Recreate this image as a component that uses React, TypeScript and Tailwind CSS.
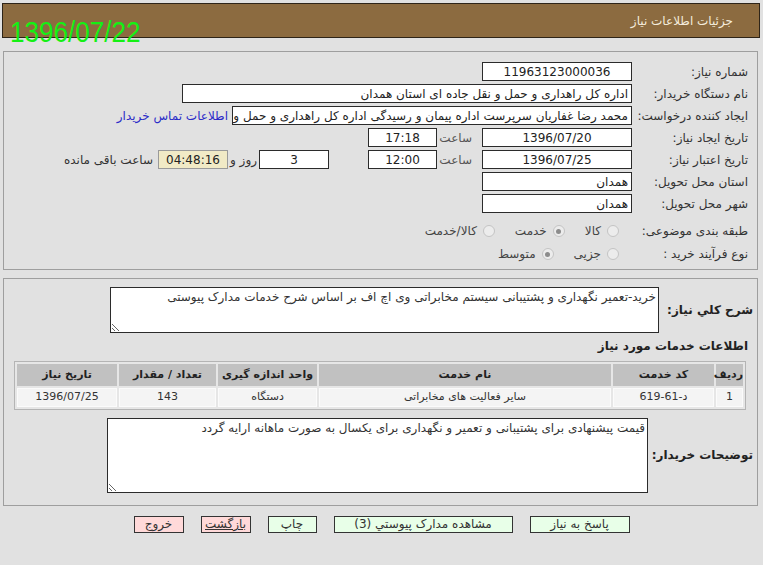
import React from "react";

const Box = ({
  className,
  children,
}: {
  className: string;
  children?: React.ReactNode;
}) => (
  <div
    className={
      "h-[19px] shrink-0 border border-[#2b2b2b] bg-white px-[3px] flex items-center overflow-hidden whitespace-nowrap text-[12px] text-[#222] " +
      className
    }
  >
    {children}
  </div>
);

const Radio = ({ checked, label }: { checked?: boolean; label: string }) => (
  <div className="flex items-center gap-[6px]">
    <span className="w-[12px] h-[12px] rounded-full border border-[#c4c4c4] bg-[#ececec] flex items-center justify-center">
      {checked && <span className="w-[5px] h-[5px] rounded-full bg-[#8c8c8c]" />}
    </span>
    <span className="text-[#444]">{label}</span>
  </div>
);

const Label = ({ children }: { children: React.ReactNode }) => (
  <div className="w-[125px] shrink-0 pr-[9px] whitespace-nowrap text-[#333]">{children}</div>
);

export default function App() {
  return (
    <div
      dir="rtl"
      className="relative w-[763px] min-h-[565px] bg-[#e1e1e1] pt-[3px] font-['Tahoma','DejaVu_Sans',sans-serif] text-[12px] text-[#333]"
    >
      {/* header bar */}
      <div className="mr-[3px] ml-[2px] h-[35px] border border-[#2e2418] bg-[#8c6b40] flex items-center pr-[26px] text-[12px] text-[#f4ecdc]">
        جزئیات اطلاعات نیاز
      </div>
      <div
        dir="ltr"
        className="absolute left-[10px] top-[18px] origin-left scale-x-90 text-[29px] leading-none text-[#14f014] font-['Liberation_Sans',sans-serif]"
      >
        1396/07/22
      </div>

      {/* main info panel */}
      <div className="mt-[13px] ml-[3px] mr-[5px] border border-[#9e9e9e] pt-[10px] pb-[5px] flex flex-col gap-[3px]">
        <div className="flex items-center">
          <Label>شماره نیاز:</Label>
          <Box className="w-[150px] justify-center">11963123000036</Box>
        </div>
        <div className="flex items-center">
          <Label>نام دستگاه خریدار:</Label>
          <Box className="w-[450px]">اداره کل راهداری و حمل و نقل جاده ای استان همدان</Box>
        </div>
        <div className="flex items-center">
          <div className="min-w-[125px] shrink-0 pr-[9px] pl-[2px] whitespace-nowrap text-[#333]">
            ایجاد کننده درخواست:
          </div>
          <Box className="w-[400px]">
            محمد رضا غفاریان سرپرست اداره پیمان و رسیدگی اداره کل راهداری و حمل و نقل
          </Box>
          <span className="pr-[4px] whitespace-nowrap text-[#2b2bc8]">اطلاعات تماس خریدار</span>
        </div>
        <div className="flex items-center">
          <Label>تاریخ ایجاد نیاز:</Label>
          <Box className="w-[150px] justify-center">1396/07/20</Box>
          <span className="w-[45px] pr-[10px] text-[#555]">ساعت</span>
          <Box className="w-[69px] justify-center">17:18</Box>
        </div>
        <div className="flex items-center">
          <Label>تاریخ اعتبار نیاز:</Label>
          <Box className="w-[150px] justify-center">1396/07/25</Box>
          <span className="w-[45px] pr-[10px] text-[#555]">ساعت</span>
          <Box className="w-[69px] justify-center">12:00</Box>
          <span className="w-[39px]" />
          <Box className="w-[70px] justify-center">3</Box>
          <span className="w-[31px] text-center whitespace-nowrap">روز و</span>
          <Box className="w-[70px] justify-center !bg-[#f1eac6] !border-[#9a9a9a]">04:48:16</Box>
          <span className="pr-[5px] whitespace-nowrap">ساعت باقی مانده</span>
        </div>
        <div className="flex items-center">
          <Label>استان محل تحویل:</Label>
          <Box className="w-[150px]">همدان</Box>
        </div>
        <div className="flex items-center">
          <Label>شهر محل تحویل:</Label>
          <Box className="w-[150px]">همدان</Box>
        </div>
        <div className="mt-[5px] h-[20px] flex items-center">
          <Label>طبقه بندی موضوعی:</Label>
          <div className="pr-[13px] flex items-center gap-[20px]">
            <Radio label="کالا" />
            <Radio checked label="خدمت" />
            <Radio label="کالا/خدمت" />
          </div>
        </div>
        <div className="h-[20px] flex items-center">
          <Label>نوع فرآیند خرید :</Label>
          <div className="pr-[13px] flex items-center gap-[20px]">
            <Radio label="جزیی" />
            <Radio checked label="متوسط" />
          </div>
        </div>
      </div>

      {/* description panel */}
      <div className="mt-[8px] ml-[3px] mr-[5px] border border-[#9e9e9e] pt-[8px] pb-[12px]">
        <div className="flex items-center">
          <div className="w-[98px] shrink-0 pr-[4px] font-bold text-[12px] text-[#222] whitespace-nowrap">
            شرح کلي نیاز:
          </div>
          <textarea
            readOnly
            className="w-[549px] h-[46px] border border-[#2b2b2b] bg-white px-[2px] py-[1px] text-[12px] text-[#333] leading-[16px]"
            value="خرید-تعمیر نگهداری و پشتیبانی سیستم مخابراتی وی اچ اف بر اساس شرح خدمات مدارک پیوستی"
          />
        </div>
        <div className="mt-[4px] h-[16px] pr-[9px] font-bold text-[12px] text-[#222]">
          اطلاعات خدمات مورد نیاز
        </div>
        <div className="mt-[8px] mr-[11px]">
          <table className="w-[729px] table-fixed border-separate border-spacing-[2px] border border-[#b4b4b4] bg-[#e6e6e6] text-[11px] text-[#333]">
            <colgroup>
              <col className="w-[27px]" />
              <col className="w-[101px]" />
              <col className="w-[292px]" />
              <col className="w-[99px]" />
              <col className="w-[97px]" />
              <col className="w-[100px]" />
            </colgroup>
            <thead>
              <tr className="h-[22px] bg-[#c1c1c1] font-bold text-[#222]">
                <th className="font-bold">ردیف</th>
                <th className="font-bold">کد خدمت</th>
                <th className="font-bold">نام خدمت</th>
                <th className="font-bold">واحد اندازه گیری</th>
                <th className="font-bold">تعداد / مقدار</th>
                <th className="font-bold">تاریخ نیاز</th>
              </tr>
            </thead>
            <tbody>
              <tr className="h-[18px] bg-[#f4f4f4] text-center">
                <td className="border border-[#fbfbfb]">1</td>
                <td className="border border-[#fbfbfb]">د-61-619</td>
                <td className="border border-[#fbfbfb]">سایر فعالیت های مخابراتی</td>
                <td className="border border-[#fbfbfb]">دستگاه</td>
                <td className="border border-[#fbfbfb]">143</td>
                <td className="border border-[#fbfbfb]">1396/07/25</td>
              </tr>
            </tbody>
          </table>
        </div>
        <div className="mt-[8px] flex items-center">
          <div className="w-[109px] shrink-0 pr-[4px] font-bold text-[12px] text-[#222] whitespace-nowrap">
            توضیحات خریدار:
          </div>
          <textarea
            readOnly
            className="w-[541px] h-[75px] border border-[#2b2b2b] bg-white px-[2px] py-[1px] text-[12px] text-[#333] leading-[16px]"
            value="قیمت پیشنهادی برای پشتیبانی و تعمیر و نگهداری برای یکسال به صورت ماهانه ارایه گردد"
          />
        </div>
      </div>

      {/* actions */}
      <div className="mt-[10px] flex justify-center gap-[17px] text-[12px] text-[#333]">
        <button className="w-[100px] h-[17px] border border-[#333] bg-[#e8ffe8] leading-none">پاسخ به نیاز</button>
        <button className="w-[179px] h-[17px] border border-[#333] bg-[#e8ffe8] leading-none">مشاهده مدارک پیوستي (3)</button>
        <button className="w-[49px] h-[17px] border border-[#333] bg-[#e8ffe8] leading-none">چاپ</button>
        <button className="w-[50px] h-[17px] border border-[#333] bg-[#ffd9d9] leading-none underline">بازگشت</button>
        <button className="w-[50px] h-[17px] border border-[#333] bg-[#ffd9d9] leading-none">خروج</button>
      </div>
    </div>
  );
}
